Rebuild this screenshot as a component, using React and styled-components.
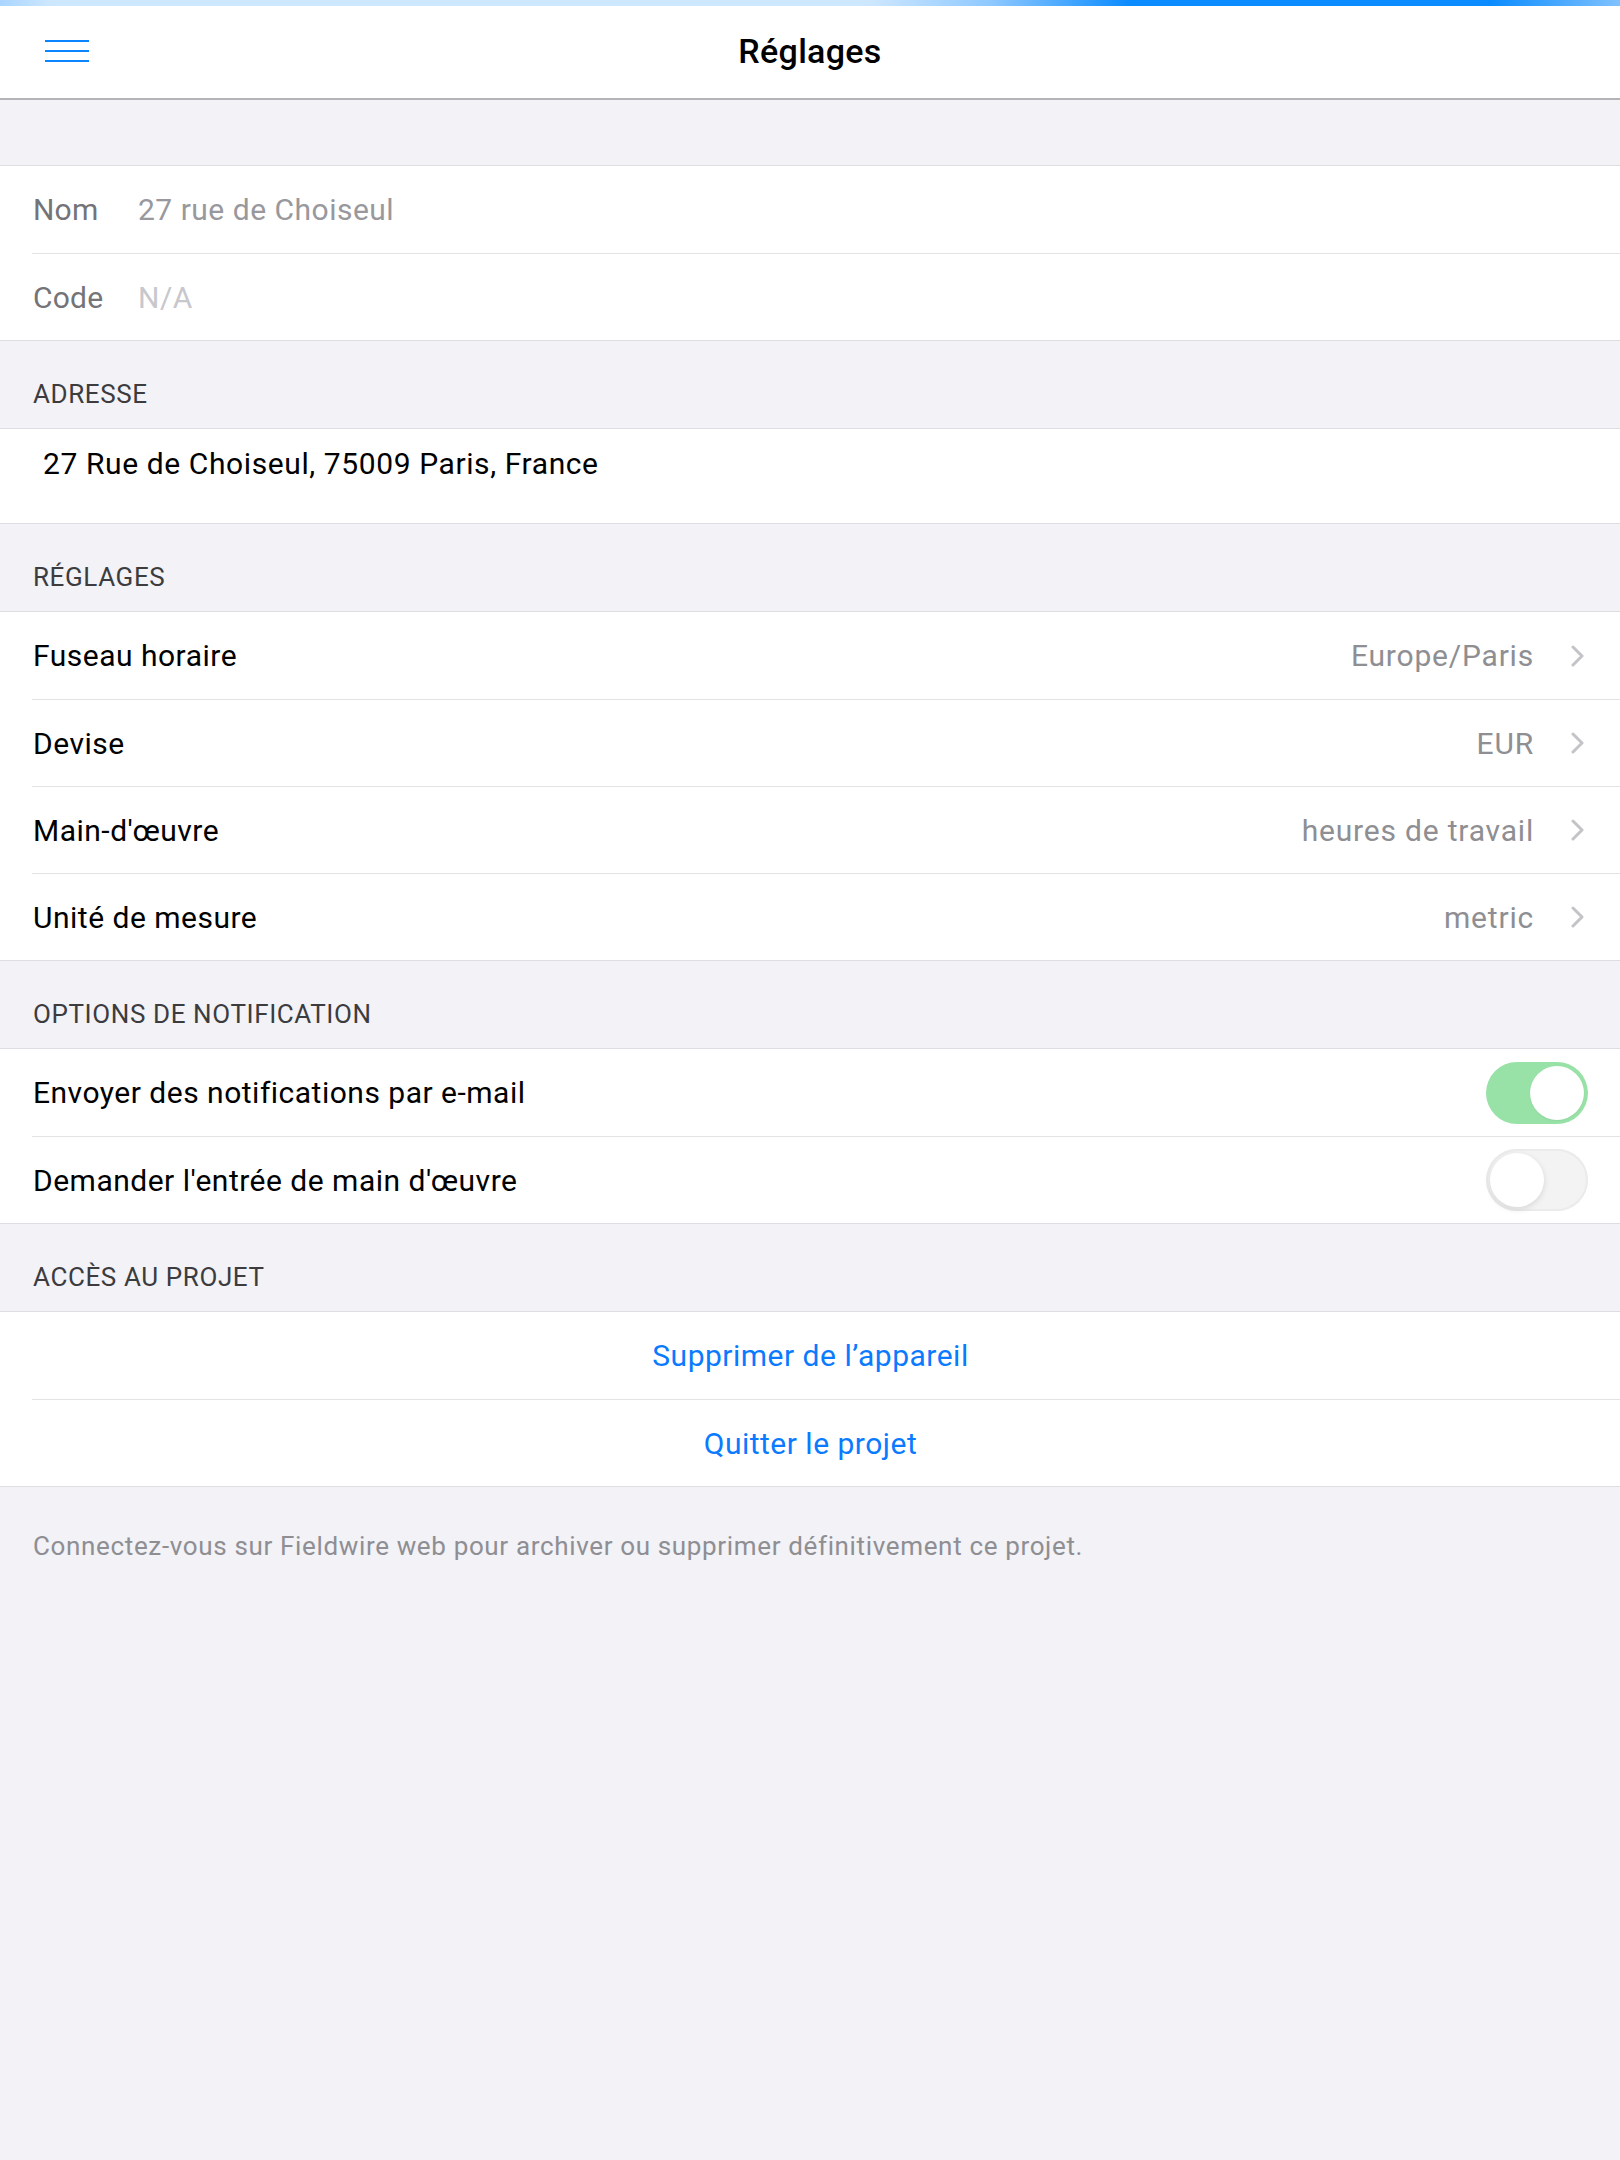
import React from "react";
import styled, { createGlobalStyle } from "styled-components";

const GlobalStyle = createGlobalStyle`
  html, body {
    margin: 0;
    padding: 0;
    background: #f2f2f7;
    font-family: Roboto, "Noto Sans", "Liberation Sans", sans-serif;
    -webkit-font-smoothing: antialiased;
  }
  * {
    box-sizing: border-box;
  }
`;

const Page = styled.div`
  min-height: 2160px;
  background: #f2f2f7;
`;

const TopBar = styled.header`
  background: #ffffff;
  border-bottom: 2px solid #b4b4b8;
`;

const Progress = styled.div`
  height: 6px;
  background: linear-gradient(
    90deg,
    #a9d5ff 0px,
    #cde7ff 50px,
    #cde7ff 870px,
    #8fc9ff 990px,
    #0a8bff 1130px,
    #0a8bff 1490px,
    #80c2ff 1620px
  );
`;

const NavRow = styled.div`
  height: 92px;
  display: grid;
  grid-template-columns: 1fr auto 1fr;
  align-items: center;
  padding: 0 45px 3px;
`;

const MenuButton = styled.button`
  justify-self: start;
  width: 44px;
  height: 22px;
  padding: 0;
  border: none;
  background: none;
  display: flex;
  flex-direction: column;
  justify-content: space-between;
  cursor: pointer;

  span {
    display: block;
    height: 2px;
    background: #0a84ff;
  }
`;

const Title = styled.h1`
  margin: 0;
  font-size: 34px;
  font-weight: 500;
  color: #000;
  letter-spacing: 0.3px;
`;

const Gap = styled.div`
  height: ${(p) => p.h}px;
`;

const SectionHeader = styled.div`
  height: 87px;
  padding: 38px 33px 0;
  font-size: 26px;
  line-height: 30px;
  color: #3c3c3f;
  text-transform: uppercase;
  letter-spacing: 0.6px;
`;

const Group = styled.section`
  background: #ffffff;
  border-top: 1px solid #dedee2;
  border-bottom: 1px solid #dedee2;
`;

const Row = styled.div`
  padding-left: 32px;
  display: flex;
  cursor: ${(p) => (p.clickable ? "pointer" : "default")};

  & + & > div {
    border-top: 1px solid #e3e3e6;
  }
`;

const RowInner = styled.div`
  flex: 1;
  height: 87px;
  display: flex;
  align-items: center;
  padding-left: 1px;
  padding-right: ${(p) => p.pr ?? 35}px;
  justify-content: ${(p) => (p.center ? "center" : "flex-start")};
  font-size: 30px;
  letter-spacing: 0.5px;
  color: #000;
`;

const FieldLabel = styled.span`
  color: #747478;
  width: 105px;
  flex-shrink: 0;
  letter-spacing: 0.2px;
`;

const FieldValue = styled.span`
  color: ${(p) => (p.placeholder ? "#c7c7cc" : "#98989d")};
`;

const AddressBox = styled.div`
  height: 94px;
  padding: 20px 43px 0;
  font-size: 30px;
  line-height: 30px;
  letter-spacing: 0.6px;
  color: #000;
`;

const Label = styled.span`
  flex: 1;
`;

const Value = styled.span`
  color: #8e8e93;
  margin-right: 37px;
  letter-spacing: 0.8px;
`;

const ActionText = styled.span`
  color: #0a7aff;
  margin-left: -32px;
`;

const Footer = styled.p`
  margin: 0;
  padding: 44px 33px 0;
  font-size: 26px;
  line-height: 30px;
  letter-spacing: 0.65px;
  color: #8e8e93;
`;

const Track = styled.div`
  width: 102px;
  height: 62px;
  border-radius: 31px;
  padding: 4px;
  display: flex;
  justify-content: ${(p) => (p.on ? "flex-end" : "flex-start")};
  background: ${(p) => (p.on ? "#98e2a8" : "#f3f3f3")};
  box-shadow: ${(p) => (p.on ? "none" : "inset 0 0 0 2px #ebebeb")};
`;

const Knob = styled.div`
  width: 54px;
  height: 54px;
  border-radius: 50%;
  background: #ffffff;
  box-shadow: ${(p) =>
    p.on ? "0 1px 2px rgba(0,0,0,0.06)" : "0 2px 6px rgba(0,0,0,0.12)"};
`;

const Chevron = () => (
  <svg width="14" height="22" viewBox="0 0 14 22" fill="none">
    <polyline
      points="2,2 11,11 2,20"
      stroke="#c4c4c8"
      strokeWidth="3"
      strokeLinecap="round"
      strokeLinejoin="round"
    />
  </svg>
);

const Toggle = ({ on }) => (
  <Track on={on ? 1 : 0}>
    <Knob on={on ? 1 : 0} />
  </Track>
);

const settings = [
  { label: "Fuseau horaire", value: "Europe/Paris" },
  { label: "Devise", value: "EUR" },
  { label: "Main-d'œuvre", value: "heures de travail" },
  { label: "Unité de mesure", value: "metric" },
];

const notifications = [
  { label: "Envoyer des notifications par e-mail", on: true },
  { label: "Demander l'entrée de main d'œuvre", on: false },
];

export default function App() {
  return (
    <Page>
      <GlobalStyle />
      <TopBar>
        <Progress />
        <NavRow>
          <MenuButton aria-label="Menu">
            <span />
            <span />
            <span />
          </MenuButton>
          <Title>Réglages</Title>
          <div />
        </NavRow>
      </TopBar>

      <Gap h={65} />

      <Group>
        <Row>
          <RowInner>
            <FieldLabel>Nom</FieldLabel>
            <FieldValue>27 rue de Choiseul</FieldValue>
          </RowInner>
        </Row>
        <Row>
          <RowInner>
            <FieldLabel>Code</FieldLabel>
            <FieldValue placeholder={1}>N/A</FieldValue>
          </RowInner>
        </Row>
      </Group>

      <SectionHeader>Adresse</SectionHeader>
      <Group>
        <AddressBox>27 Rue de Choiseul, 75009 Paris, France</AddressBox>
      </Group>

      <SectionHeader>Réglages</SectionHeader>
      <Group>
        {settings.map((s) => (
          <Row key={s.label} clickable={1}>
            <RowInner>
              <Label>{s.label}</Label>
              <Value>{s.value}</Value>
              <Chevron />
            </RowInner>
          </Row>
        ))}
      </Group>

      <SectionHeader>Options de notification</SectionHeader>
      <Group>
        {notifications.map((n) => (
          <Row key={n.label}>
            <RowInner pr={32}>
              <Label>{n.label}</Label>
              <Toggle on={n.on} />
            </RowInner>
          </Row>
        ))}
      </Group>

      <SectionHeader>Accès au projet</SectionHeader>
      <Group>
        <Row clickable={1}>
          <RowInner center={1} pr={0}>
            <ActionText>Supprimer de l’appareil</ActionText>
          </RowInner>
        </Row>
        <Row clickable={1}>
          <RowInner center={1} pr={0}>
            <ActionText>Quitter le projet</ActionText>
          </RowInner>
        </Row>
      </Group>

      <Footer>
        Connectez-vous sur Fieldwire web pour archiver ou supprimer
        définitivement ce projet.
      </Footer>
    </Page>
  );
}
